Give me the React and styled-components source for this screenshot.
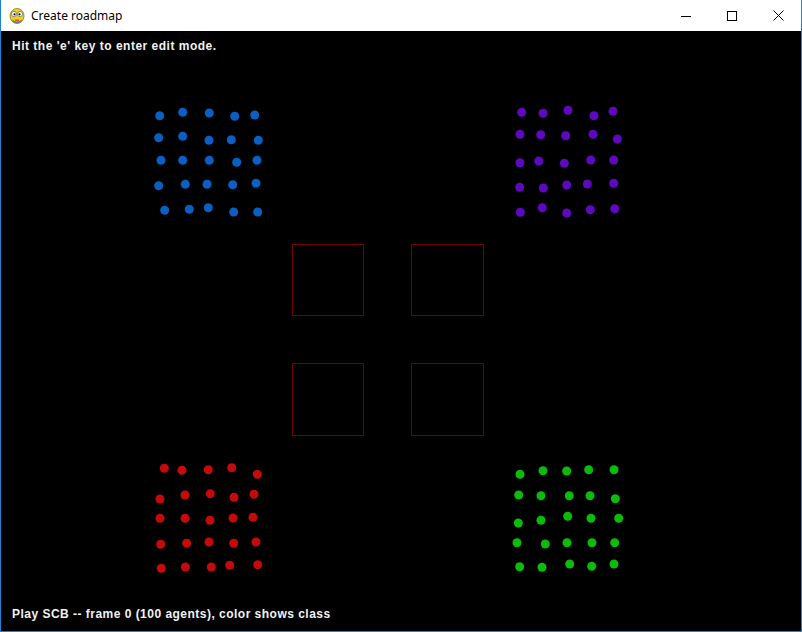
import React from "react";
import styled, { createGlobalStyle } from "styled-components";

const Global = createGlobalStyle`
  html, body { margin: 0; padding: 0; background: #ffffff; }
  #root { width: 802px; height: 632px; }
`;

const Window = styled.div`
  box-sizing: border-box;
  width: 802px;
  height: 632px;
  border: 1px solid #1883d7;
  border-top: none;
  display: flex;
  flex-direction: column;
  background: #ffffff;
`;

const TitleBar = styled.div`
  height: 31px;
  flex: none;
  display: flex;
  align-items: center;
  background: #ffffff;
`;

const AppIcon = styled.svg`
  width: 18px;
  height: 18px;
  margin-left: 7px;
  margin-right: 5px;
  flex: none;
`;

const Title = styled.div`
  font-family: "Noto Sans", "Open Sans", sans-serif;
  font-size: 12px;
  color: #000000;
  flex: 1;
  padding-bottom: 1px;
`;

const Controls = styled.div`
  display: flex;
  height: 100%;
`;

const ControlButton = styled.div`
  width: 46px;
  height: 100%;
  display: flex;
  align-items: center;
  justify-content: center;
`;

const Canvas = styled.div`
  position: relative;
  width: 800px;
  height: 600px;
  background: #000000;
  display: flex;
  flex-direction: column;
  justify-content: space-between;
`;

const Drawing = styled.svg`
  position: absolute;
  left: 0;
  top: 0;
  width: 800px;
  height: 600px;
`;

const Message = styled.div`
  position: relative;
  font-family: "Liberation Sans", Arial, sans-serif;
  font-weight: bold;
  font-size: 12px;
  line-height: 14px;
  color: #f2f2f2;
  letter-spacing: ${(p) => p.$spacing || "0px"};
  padding: ${(p) => (p.$bottom ? "0 11px 10px 11px" : "8px 11px 0 11px")};
`;

const clusters = [
  {
    color: "#0a5fc4",
    pts: [
      [159.7, 115.7], [182.7, 112.3], [209.3, 113], [234.7, 116.3], [254.7, 115],
      [158.7, 137.7], [182.7, 136.3], [209, 140.3], [231.3, 139.7], [258.3, 140.3],
      [161, 160.3], [182.7, 160.3], [209.3, 160.3], [236.7, 162.3], [257, 160.3],
      [158.7, 185.7], [185.3, 184.3], [207, 184.3], [232.7, 184.7], [256, 183.3],
      [164.7, 210.3], [189.3, 209.3], [208.3, 207.7], [233.7, 212], [257.7, 212],
    ],
  },
  {
    color: "#5e08c0",
    pts: [
      [521.7, 112.3], [543, 113.3], [568, 110.3], [594, 115.7], [613, 111.3],
      [520, 134.3], [540.7, 134.7], [565.7, 135.7], [593, 134.3], [617.3, 139],
      [520, 162.7], [538.7, 161], [564.3, 163.3], [590.7, 160], [613.7, 160],
      [519.7, 187.3], [543.3, 188], [566.7, 185], [587.3, 184], [613.7, 183.3],
      [520.3, 212.3], [542.3, 207.7], [566.7, 213], [590.3, 209.7], [614.7, 208.7],
    ],
  },
  {
    color: "#c40a0a",
    pts: [
      [164.3, 468.3], [182, 470.3], [208.3, 469.7], [231.7, 467.7], [257.3, 474.3],
      [160, 499], [185, 495], [210.3, 493.7], [234, 497.3], [254, 494.3],
      [160, 518.3], [185, 518.3], [210, 520.3], [233, 518], [253, 517.3],
      [160.7, 544.3], [186.7, 543.3], [209, 542], [233.7, 543.3], [256, 542],
      [161.3, 568.3], [185.3, 567], [211.3, 567], [229.7, 565.3], [257.7, 564.7],
    ],
  },
  {
    color: "#0abb0a",
    pts: [
      [520, 474.3], [543, 470.7], [566.7, 471], [588.7, 469.7], [614, 469.7],
      [518.7, 495], [541, 495.7], [569.3, 495.7], [590, 495.7], [615.3, 498.7],
      [518.3, 523], [541, 520.3], [567.7, 516.3], [591, 518.3], [618.7, 518.3],
      [517, 542.7], [545.3, 544], [567, 542.7], [592, 542.7], [614.7, 542.7],
      [519.7, 566.7], [542, 567.3], [569.7, 564], [591.7, 566.3], [614, 564],
    ],
  },
];

const obstacles = [
  [292, 244, 71, 71],
  [411, 244, 72, 71],
  [292, 363, 71, 72],
  [411, 363, 72, 72],
];

export default function App() {
  return (
    <>
      <Global />
      <Window>
        <TitleBar>
          <AppIcon viewBox="0 0 18 18">
            <ellipse cx="9" cy="9" rx="7" ry="7.5" fill="#e8d22a" stroke="#8a7a10" strokeWidth="0.8" />
            <circle cx="6" cy="7" r="2.6" fill="#ffffff" stroke="#555" strokeWidth="0.6" />
            <circle cx="12" cy="7" r="2.6" fill="#ffffff" stroke="#555" strokeWidth="0.6" />
            <circle cx="6.5" cy="7.3" r="1.1" fill="#111" />
            <circle cx="11.5" cy="7.3" r="1.1" fill="#111" />
            <path d="M4 12.5 Q9 16.5 14 12.5 L13 15 Q9 17.5 5 15 Z" fill="#7a7a7a" />
            <path d="M7 13.2 L11 13.2" stroke="#c22" strokeWidth="1" />
          </AppIcon>
          <Title>Create roadmap</Title>
          <Controls>
            <ControlButton>
              <svg width="10" height="10" viewBox="0 0 10 10">
                <path d="M0 5.5 H10" stroke="#000" strokeWidth="1" />
              </svg>
            </ControlButton>
            <ControlButton>
              <svg width="10" height="10" viewBox="0 0 10 10">
                <rect x="0.5" y="0.5" width="9" height="9" fill="none" stroke="#000" strokeWidth="1" />
              </svg>
            </ControlButton>
            <ControlButton>
              <svg width="11" height="11" viewBox="0 0 11 11">
                <path d="M0.5 0.5 L10.5 10.5 M10.5 0.5 L0.5 10.5" stroke="#000" strokeWidth="1" />
              </svg>
            </ControlButton>
          </Controls>
        </TitleBar>
        <Canvas>
          <Drawing viewBox="1 31 800 600">
            {obstacles.map(([x, y, w, h], i) => (
              <rect key={i} x={x + 0.5} y={y + 0.5} width={w} height={h} fill="none" stroke="#720000" strokeWidth="1" />
            ))}
            {clusters.map((c, ci) =>
              c.pts.map(([x, y], i) => (
                <circle key={`${ci}-${i}`} cx={x} cy={y} r="4.5" fill={c.color} />
              ))
            )}
          </Drawing>
          <Message $spacing="0.5px">Hit the 'e' key to enter edit mode.</Message>
          <Message $bottom $spacing="0.48px">Play SCB -- frame 0 (100 agents), color shows class</Message>
        </Canvas>
      </Window>
    </>
  );
}
